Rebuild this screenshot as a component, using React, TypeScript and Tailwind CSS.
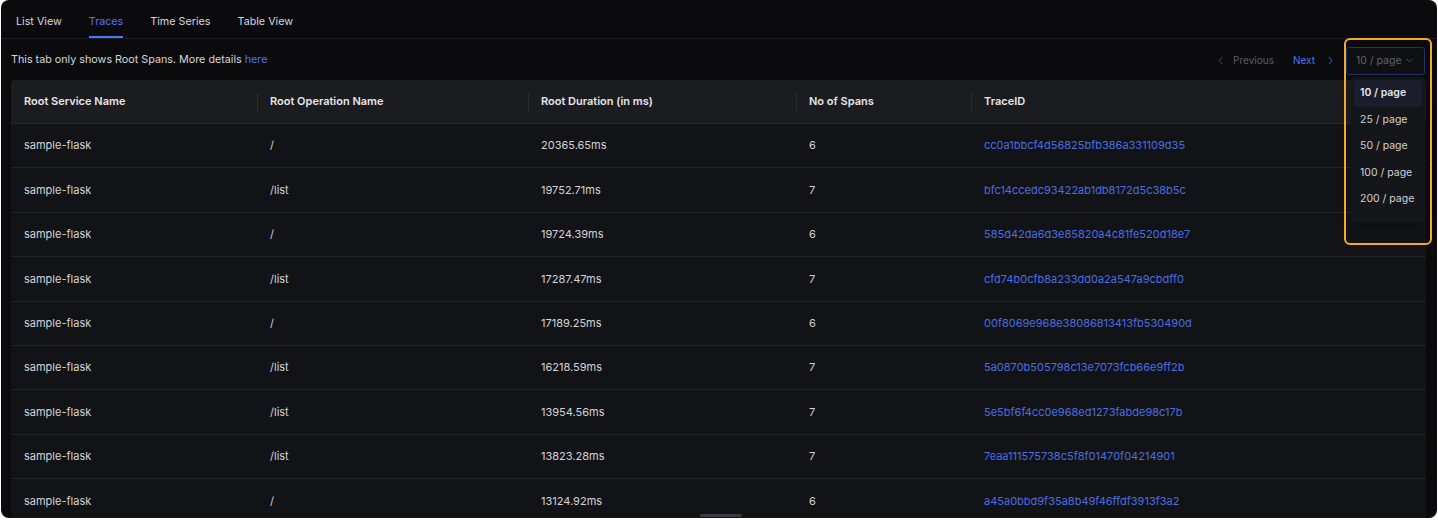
import { ChevronLeft, ChevronRight, ChevronDown } from "lucide-react";

const rows = [
  ["sample-flask", "/", "20365.65ms", "6", "cc0a1bbcf4d56825bfb386a331109d35"],
  ["sample-flask", "/list", "19752.71ms", "7", "bfc14ccedc93422ab1db8172d5c38b5c"],
  ["sample-flask", "/", "19724.39ms", "6", "585d42da6d3e85820a4c81fe520d18e7"],
  ["sample-flask", "/list", "17287.47ms", "7", "cfd74b0cfb8a233dd0a2a547a9cbdff0"],
  ["sample-flask", "/", "17189.25ms", "6", "00f8069e968e38086813413fb530490d"],
  ["sample-flask", "/list", "16218.59ms", "7", "5a0870b505798c13e7073fcb66e9ff2b"],
  ["sample-flask", "/list", "13954.56ms", "7", "5e5bf6f4cc0e968ed1273fabde98c17b"],
  ["sample-flask", "/list", "13823.28ms", "7", "7eaa111575738c5f8f01470f04214901"],
  ["sample-flask", "/", "13124.92ms", "6", "a45a0bbd9f35a8b49f46ffdf3913f3a2"],
];

const columns = [
  { label: "Root Service Name", w: "w-[246px]" },
  { label: "Root Operation Name", w: "w-[271px]" },
  { label: "Root Duration (in ms)", w: "w-[268px]" },
  { label: "No of Spans", w: "w-[175px]" },
  { label: "TraceID", w: "flex-1" },
];

const pageSizes = ["10 / page", "25 / page", "50 / page", "100 / page", "200 / page"];

export default function App() {
  return (
    <div className="h-[528px] w-full bg-white pl-px" style={{ fontFamily: "Inter, 'Noto Sans', sans-serif" }}>
      <div className="relative h-[518px] w-[1436px] overflow-hidden rounded-lg bg-[#0b0b0e]">
        {/* tabs */}
        <div className="flex h-[39px] items-end gap-[27px] border-b border-[#1d1e23] pl-[15px] text-[10.75px] text-[#d6d6da]">
          <span className="pb-[8px]">List View</span>
          <span className="relative pb-[8px] text-[#4e74f8]">
            Traces
            <span className="absolute bottom-0 left-0 right-0 h-[2px] bg-[#4e74f8]" />
          </span>
          <span className="pb-[8px]">Time Series</span>
          <span className="pb-[8px]">Table View</span>
        </div>

        {/* info + pagination */}
        <div className="flex h-[41px] items-center pl-[10px] pr-[12px] pt-[2px] text-[10.75px]">
          <span className="text-[#d6d6da]">
            This tab only shows Root Spans. More details <span className="text-[#4e74f8]">here</span>
          </span>
          <div className="ml-auto flex items-center text-[10px]">
            <span className="flex items-center gap-[6px] text-[#5b5d66]">
              <ChevronLeft size={13} strokeWidth={1.5} />
              Previous
            </span>
            <span className="ml-[19px] flex items-center gap-[9px] text-[#4e74f8]">
              Next
              <ChevronRight size={13} strokeWidth={1.5} />
            </span>
            <div className="ml-[9px] flex h-[28px] w-[79px] items-center justify-between rounded-[3px] border border-[#1e3566] bg-[#0f1014] px-[9px] text-[10.5px] text-[#5f626b]">
              <span>10 / page</span>
              <ChevronDown size={11} strokeWidth={1.5} />
            </div>
          </div>
        </div>

        {/* table */}
        <div className="mx-[10px] w-[1415px] overflow-hidden rounded-t-[4px] bg-[#121317]">
          <div className="flex h-[44px] items-center border-b border-[#25262c] bg-[#1b1c20] text-[11px] font-semibold text-[#e6e6ea]">
            {columns.map((c, i) => (
              <div key={c.label} className={`${c.w} relative flex h-full items-center pl-[13px]`}>
                {i > 0 && <span className="absolute left-0 top-[13px] h-[19px] w-px bg-[#2b2c32]" />}
                {c.label}
              </div>
            ))}
          </div>
          {rows.map((r, idx) => (
            <div key={idx} className="flex h-[44.4px] items-center border-b border-[#23242a] text-[11px] text-[#d3d4d8]">
              {r.map((cell, i) => (
                <div key={i} className={`${columns[i].w} pl-[13px] ${i === 4 ? "text-[#4a6ee0]" : ""}`}>
                  {cell}
                </div>
              ))}
            </div>
          ))}
        </div>

        {/* scrollbar hint */}
        <div className="absolute bottom-[1px] left-[699px] h-[3px] w-[42px] rounded-full bg-[#3a3b44]" />

        {/* dropdown menu */}
        <div className="absolute left-[1350px] top-[77px] h-[145px] w-[74px] rounded-[4px] bg-[#15161a] px-[3px] py-[3px] shadow-lg">
          {pageSizes.map((p, i) => (
            <div
              key={p}
              className={`flex h-[26.5px] items-center rounded-[3px] px-[6px] text-[10.5px] ${
                i === 0 ? "bg-[#1b1d2c] font-semibold text-[#e6e6ea]" : "text-[#cfd0d5]"
              }`}
            >
              {p}
            </div>
          ))}
        </div>

        {/* highlight */}
        <div className="pointer-events-none absolute left-[1343px] top-[38px] h-[207px] w-[88px] rounded-[6px] border-2 border-[#f4a82c]" />
      </div>
    </div>
  );
}
